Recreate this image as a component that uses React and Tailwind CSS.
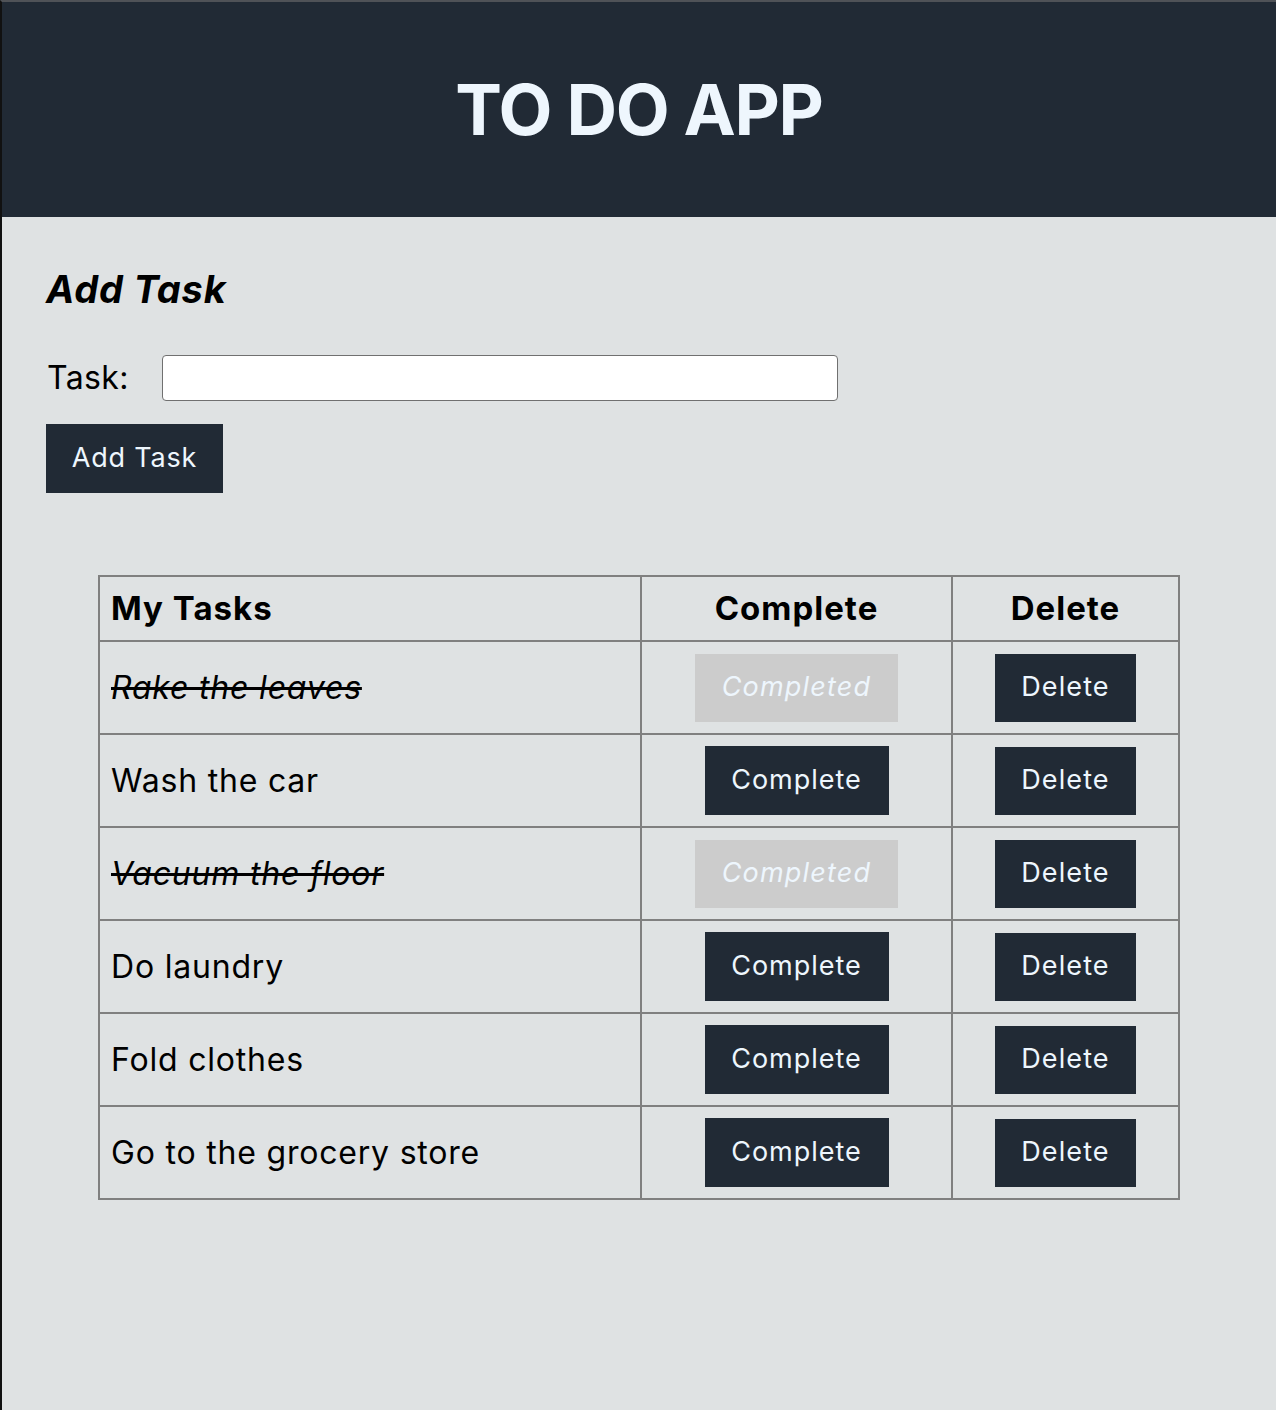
import React from "react";

const tasks = [
  { name: "Rake the leaves", done: true },
  { name: "Wash the car", done: false },
  { name: "Vacuum the floor", done: true },
  { name: "Do laundry", done: false },
  { name: "Fold clothes", done: false },
  { name: "Go to the grocery store", done: false },
];

export default function App() {
  return (
    <div className="min-h-[1410px] bg-[#dfe2e3] border-l-2 border-l-[#111] border-t-2 border-t-[#4f5257] text-black" style={{ fontFamily: "Inter, 'Noto Sans', sans-serif" }}>
      <header className="h-[215px] bg-[#212a35] flex items-center justify-center">
        <h1 className="text-[70px] font-bold text-[#eef6fd] tracking-[-1.3px] leading-none">TO DO APP</h1>
      </header>
      <main className="pl-[44px] pt-[53px]">
        <h2 className="text-[38px] font-bold italic leading-none tracking-[0.8px]">Add Task</h2>
        <div className="mt-[46px] flex items-center">
          <label className="text-[32px] w-[116px] pl-[1px] tracking-[0.4px]">Task:</label>
          <input type="text" className="w-[676px] h-[46px] bg-white border-[1.5px] border-[#707070] rounded-[4px]" />
        </div>
        <button className="mt-[22px] w-[177px] h-[69px] bg-[#212a35] text-[#eef6fd] text-[27px] tracking-[0.8px]">Add Task</button>
        <table className="mt-[82px] ml-[52px] w-[1082px] border-collapse border-2 border-[#808080]">
          <thead>
            <tr className="h-[65px]">
              <th className="w-[542px] border-2 border-[#808080] text-left pl-[11px] text-[33px] font-bold tracking-[1px]">My Tasks</th>
              <th className="w-[311px] border-2 border-[#808080] text-center text-[33px] font-bold tracking-[1px]">Complete</th>
              <th className="border-2 border-[#808080] text-center text-[33px] font-bold tracking-[1px]">Delete</th>
            </tr>
          </thead>
          <tbody>
            {tasks.map((t) => (
              <tr key={t.name} className="h-[93px]">
                <td className={`border-2 border-[#808080] pl-[11px] text-[32px] tracking-[0.8px] ${t.done ? "italic line-through" : ""}`}>{t.name}</td>
                <td className="border-2 border-[#808080] text-center">
                  {t.done ? (
                    <button className="w-[203px] h-[68px] bg-[#cccccc] text-[#eef6fd] italic text-[27px] tracking-[1.2px] align-middle">Completed</button>
                  ) : (
                    <button className="w-[184px] h-[69px] bg-[#212a35] text-[#eef6fd] text-[27px] tracking-[1px] align-middle">Complete</button>
                  )}
                </td>
                <td className="border-2 border-[#808080] text-center">
                  <button className="w-[141px] h-[68px] bg-[#212a35] text-[#eef6fd] text-[27px] tracking-[1.1px] align-middle">Delete</button>
                </td>
              </tr>
            ))}
          </tbody>
        </table>
      </main>
    </div>
  );
}
